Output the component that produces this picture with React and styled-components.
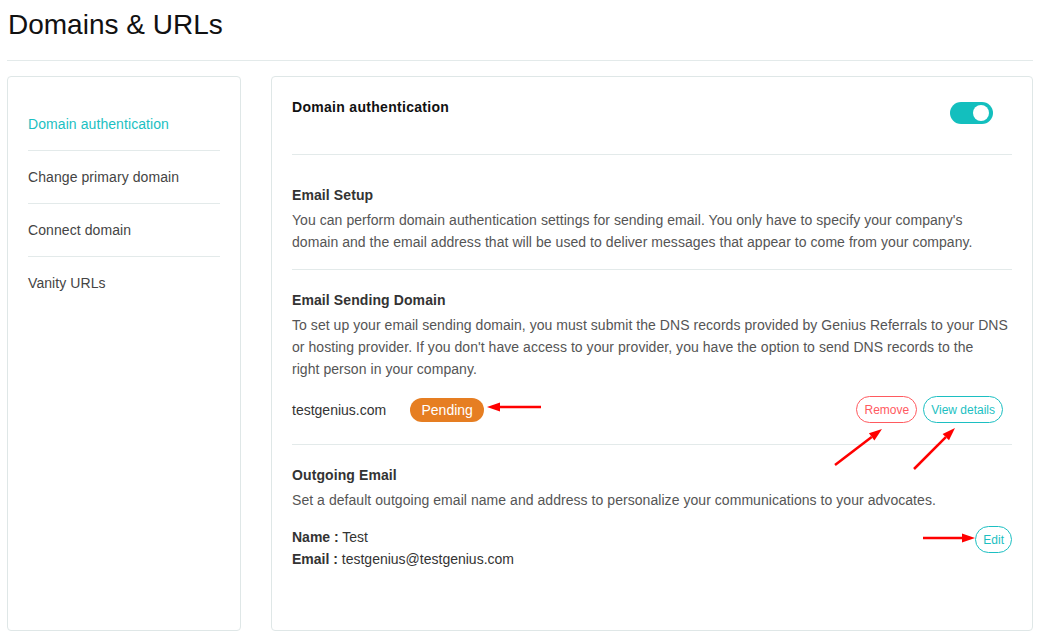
import React from 'react';
import styled, { createGlobalStyle } from 'styled-components';

const GlobalStyle = createGlobalStyle`
  body {
    margin: 0;
    background: #ffffff;
    font-family: "Liberation Sans", Arial, sans-serif;
    color: #333;
  }
`;

const Page = styled.div`
  position: relative;
  width: 1040px;
  height: 637px;
  padding: 0 7px;
  box-sizing: border-box;
  overflow: hidden;
`;

const Header = styled.div`
  padding: 9px 0 19px 1px;
  border-bottom: 1px solid #e3eaea;
`;

const Title = styled.h1`
  margin: 0;
  font-size: 28px;
  line-height: 32px;
  font-weight: normal;
  color: #111;
`;

const Columns = styled.div`
  display: flex;
  align-items: stretch;
  gap: 30px;
  margin-top: 15px;
  height: 555px;
`;

const Card = styled.div`
  border: 1px solid #dfe7e7;
  border-radius: 4px;
  background: #fff;
  box-sizing: border-box;
`;

const Sidebar = styled(Card)`
  width: 234px;
  padding: 20px 20px;
`;

const NavItem = styled.div`
  padding: 16px 0 16px;
  font-size: 14px;
  line-height: 20px;
  letter-spacing: 0.08px;
  color: ${(p) => (p.$active ? '#1cbfc2' : '#444')};
  border-bottom: ${(p) => (p.$last ? 'none' : '1px solid #e3eaea')};

  &:first-child {
    padding-top: 16px;
    margin-top: 1px;
  }
`;

const Main = styled(Card)`
  flex: 1;
  padding: 0 20px;
`;

const TopRow = styled.div`
  display: flex;
  justify-content: space-between;
  align-items: flex-start;
  padding: 20px 19px 30px 0;
  border-bottom: 1px solid #e3eaea;
`;

const MainHeading = styled.div`
  font-size: 14px;
  line-height: 20px;
  font-weight: bold;
  letter-spacing: 0.3px;
  color: #111;
`;

const Toggle = styled.div`
  position: relative;
  margin-top: 5px;
  width: 43px;
  height: 22px;
  border-radius: 11px;
  background: ${(p) => (p.$on ? '#13bfbe' : '#ccc')};

  &::after {
    content: '';
    position: absolute;
    top: 3px;
    ${(p) => (p.$on ? 'right: 4px;' : 'left: 4px;')}
    width: 16px;
    height: 16px;
    border-radius: 50%;
    background: #fff;
  }
`;

const Section = styled.div`
  padding: ${(p) => (p.$first ? '30px' : '20px')} 0 16px;
  border-bottom: ${(p) => (p.$last ? 'none' : '1px solid #e3eaea')};
`;

const SectionTitle = styled.div`
  font-size: 14px;
  line-height: 20px;
  font-weight: bold;
  letter-spacing: 0.1px;
  color: #333;
  margin-bottom: 4px;
`;

const Text = styled.p`
  margin: 0;
  font-size: 14px;
  line-height: 22px;
  letter-spacing: 0.05px;
  color: #555;
`;

const DomainRow = styled.div`
  display: flex;
  align-items: center;
  margin-top: 16px;
  margin-bottom: 5px;
  height: 27px;
`;

const DomainName = styled.span`
  font-size: 14px;
  color: #333;
`;

const Badge = styled.span`
  margin-left: 24px;
  display: inline-flex;
  align-items: center;
  justify-content: center;
  width: 74px;
  height: 24px;
  border-radius: 12px;
  background: #e67e22;
  color: #fff;
  font-size: 14px;
`;

const Actions = styled.div`
  margin-left: auto;
  margin-right: ${(p) => p.$offset || 0}px;
  display: flex;
  gap: 6px;
`;

const PillButton = styled.button`
  height: 27px;
  padding: 0 7px;
  border-radius: 14px;
  border: 1px solid ${(p) => (p.$danger ? '#ff5a5f' : '#1cbfc2')};
  color: ${(p) => (p.$danger ? '#ff5a5f' : '#1cbfc2')};
  background: #fff;
  font-family: "Liberation Sans", Arial, sans-serif;
  font-size: 12px;
  cursor: pointer;
`;

const InfoRow = styled.div`
  display: flex;
  justify-content: space-between;
  align-items: flex-start;
  margin-top: 15px;
`;

const InfoLine = styled.div`
  font-size: 14px;
  line-height: 22px;
  color: #333;

  b {
    color: #333;
  }
`;

const Annotations = styled.svg`
  position: absolute;
  left: 0;
  top: 0;
  pointer-events: none;
`;

const arrows = [
  { x1: 541, y1: 407, x2: 487, y2: 407 },
  { x1: 835, y1: 465, x2: 882, y2: 429 },
  { x1: 914, y1: 469, x2: 955, y2: 428 },
  { x1: 923, y1: 538, x2: 975, y2: 538 },
];

function Arrow({ x1, y1, x2, y2 }) {
  const ang = Math.atan2(y2 - y1, x2 - x1);
  const len = 13;
  const w = 4.5;
  const bx = x2 - len * Math.cos(ang);
  const by = y2 - len * Math.sin(ang);
  const px = -Math.sin(ang) * w;
  const py = Math.cos(ang) * w;
  return (
    <g>
      <line x1={x1} y1={y1} x2={bx} y2={by} stroke="#ff0000" strokeWidth="2.5" />
      <polygon
        points={`${x2},${y2} ${bx + px},${by + py} ${bx - px},${by - py}`}
        fill="#ff0000"
      />
    </g>
  );
}

const navItems = [
  'Domain authentication',
  'Change primary domain',
  'Connect domain',
  'Vanity URLs',
];

export default function App() {
  return (
    <>
      <GlobalStyle />
      <Page>
        <Header>
          <Title>Domains &amp; URLs</Title>
        </Header>
        <Columns>
          <Sidebar>
            {navItems.map((item, i) => (
              <NavItem key={item} $active={i === 0} $last={i === navItems.length - 1}>
                {item}
              </NavItem>
            ))}
          </Sidebar>
          <Main>
            <TopRow>
              <MainHeading>Domain authentication</MainHeading>
              <Toggle $on />
            </TopRow>

            <Section $first>
              <SectionTitle>Email Setup</SectionTitle>
              <Text>
                You can perform domain authentication settings for sending email. You only have to specify your company's
                domain and the email address that will be used to deliver messages that appear to come from your company.
              </Text>
            </Section>

            <Section>
              <SectionTitle>Email Sending Domain</SectionTitle>
              <Text>
                To set up your email sending domain, you must submit the DNS records provided by Genius Referrals to your DNS
                or hosting provider. If you don't have access to your provider, you have the option to send DNS records to the
                <br />
                right person in your company.
              </Text>
              <DomainRow>
                <DomainName>testgenius.com</DomainName>
                <Badge>Pending</Badge>
                <Actions $offset={9}>
                  <PillButton $danger>Remove</PillButton>
                  <PillButton>View details</PillButton>
                </Actions>
              </DomainRow>
            </Section>

            <Section $last>
              <SectionTitle>Outgoing Email</SectionTitle>
              <Text>
                Set a default outgoing email name and address to personalize your communications to your advocates.
              </Text>
              <InfoRow>
                <div>
                  <InfoLine>
                    <b>Name :</b> Test
                  </InfoLine>
                  <InfoLine>
                    <b>Email :</b> testgenius@testgenius.com
                  </InfoLine>
                </div>
                <PillButton>Edit</PillButton>
              </InfoRow>
            </Section>
          </Main>
        </Columns>
        <Annotations width="1040" height="637" viewBox="0 0 1040 637">
          {arrows.map((a, i) => (
            <Arrow key={i} {...a} />
          ))}
        </Annotations>
      </Page>
    </>
  );
}
